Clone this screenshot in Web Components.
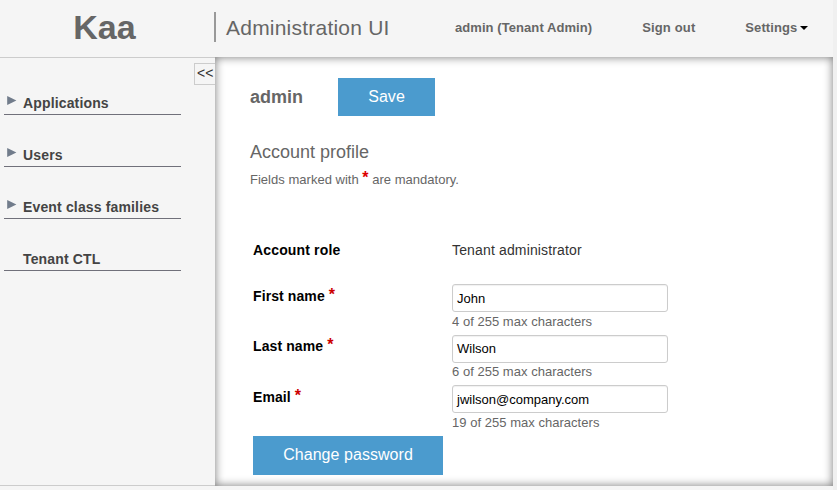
<!DOCTYPE html>
<html lang="en">
<head>
<meta charset="utf-8">
<title>Kaa Administration UI</title>
<style>
html,body{margin:0;height:100%;overflow:hidden;background:#f5f5f5}
body{font-family:"Liberation Sans",Arial,sans-serif;font-size:13px;color:#666}
</style>
</head>
<body>
<kaa-app></kaa-app>
<script>
const define = (name, html, setup) => customElements.define(name, class extends HTMLElement {
  constructor() {
    super();
    const t = document.createElement('template');
    t.innerHTML = html;
    this.attachShadow({mode: 'open'}).append(t.content.cloneNode(true));
  }
  connectedCallback() { if (setup) setup(this, this.shadowRoot); }
});

define('kaa-header', `<style>
:host{display:flex;height:57px;box-sizing:border-box;color:#666;white-space:nowrap}
.brand{width:208px;padding-left:1px;text-align:center;font:bold 34px/54px "Liberation Sans",sans-serif;margin-right:6px;box-sizing:border-box}
.title{height:30px;margin-top:12px;border-left:2px solid #999;padding-left:10px;width:229px;box-sizing:border-box;font-size:21px;line-height:31px;letter-spacing:.22px}
nav{display:flex;padding-left:12px;font-weight:bold;line-height:55px;letter-spacing:.07px}
.out{margin-left:50px;letter-spacing:.15px}.set{margin-left:50px;display:flex;height:55px;align-items:center}
i{margin:1px 0 0 3px;border:4px solid transparent;border-top-color:#000;border-bottom:0}
</style>
<div class="brand">Kaa</div><div class="title">Administration UI</div>
<nav><span>admin (Tenant Admin)</span><span class="out">Sign out</span><span class="set">Settings<i></i></span></nav>`);

define('nav-item', `<style>
:host{display:flex;height:52px;box-sizing:border-box;border-bottom:1px solid #70707a;font-weight:bold;font-size:14px;letter-spacing:.15px;color:#444;padding:31px 0 0 3px;line-height:18px}
svg{width:10px;height:9px;margin:2px 6px 0 0}
:host([leaf]) svg{visibility:hidden}
</style><svg viewBox="0 0 10 9"><path d="M.2 0V9L9.4 4.5Z" fill="#717c8b"/></svg><slot></slot>`);

define('kaa-sidebar', `<style>
:host{display:flex;width:215px;box-sizing:border-box;border-top:1px solid #ccc;border-bottom:1px solid #ccc}
.tree{width:177px;margin:5px 13px 0 4px}
.toggle{width:21px;height:22px;box-sizing:border-box;margin-top:5px;border:1px solid #ccc;border-right:0;color:#333;font-size:14px;line-height:19px;padding-left:2px}
</style><div class="tree"><nav-item>Applications</nav-item><nav-item>Users</nav-item><nav-item>Event class families</nav-item><nav-item leaf>Tenant CTL</nav-item></div><div class="toggle">&lt;&lt;</div>`);

define('kaa-button', `<style>
:host{display:block;box-sizing:border-box;background:#4b9bce;color:#fff;font-size:16px;line-height:38px;text-align:center;letter-spacing:.05px}
</style><slot></slot>`);

define('form-field', `<style>
:host{display:grid;grid-template-columns:199px 216px;align-items:start}
label{font-weight:bold;font-size:14px;line-height:16px;color:#000;padding-top:4px;letter-spacing:.1px}
b{color:#c00;font-size:16px;line-height:1px;vertical-align:1px}
.box{height:28px;box-sizing:border-box;border:1px solid #ccc;border-radius:3px;box-shadow:inset 0 1px 1px rgba(0,0,0,.06);color:#000;line-height:27px;padding-left:4px}
.count{line-height:19px;letter-spacing:.03px}
:host(.second) label{padding-top:3px}
:host(.second) .box{line-height:25px}
:host(.second) .count{line-height:17px}
</style><label><slot name="label"></slot> <b>*</b></label><div><div class="box"><slot></slot></div><div class="count"></div></div>`,
(el, root) => { root.querySelector('.count').textContent = el.textContent.replace(el.querySelector('[slot]').textContent, '').trim().length + ' of 255 max characters'; });

define('account-profile', `<style>
:host{display:block;width:618px;height:429px;box-sizing:border-box;background:#fff;box-shadow:inset 0 0 10px rgba(0,0,0,.54);padding:21px 0 0 35px}
.top{display:flex;line-height:38px;font-size:18px;font-weight:bold}
.top span{width:88px}
.top kaa-button{width:97px;font-weight:normal}
h2{font-weight:normal;font-size:18px;line-height:22px;margin:25px 0 0}
p{margin:8px 0 0;line-height:18px;letter-spacing:.02px}
p b{color:#d00;font-size:16px;line-height:1px;vertical-align:1px}
.form{padding-left:3px}
.role{display:grid;grid-template-columns:199px 1fr;font-size:14px;line-height:18px;color:#333;margin:52px 0 25px}
.role b{color:#000;letter-spacing:.15px}
.role span{letter-spacing:.15px}
form-field{height:50px}
.second{height:50px;margin-top:1px}
.change{width:190px;height:39px;margin-top:1px}
</style>
<div class="top"><span>admin</span><kaa-button>Save</kaa-button></div>
<h2>Account profile</h2><p>Fields marked with <b>*</b> are mandatory.</p>
<div class="form"><div class="role"><b>Account role</b><span>Tenant administrator</span></div>
<form-field><span slot="label">First name</span>John</form-field>
<form-field class="second"><span slot="label">Last name</span>Wilson</form-field>
<form-field><span slot="label">Email</span>jwilson@company.com</form-field>
<kaa-button class="change">Change password</kaa-button></div>`);

define('kaa-app', `<style>
:host{display:block;width:837px;height:490px;background:linear-gradient(#f0f0f0,#f0f0f0) right/4px 100% no-repeat #f5f5f5}
main{display:flex;height:429px}
</style><kaa-header></kaa-header><main><kaa-sidebar></kaa-sidebar><account-profile></account-profile></main>`);
</script>
</body>
</html>
